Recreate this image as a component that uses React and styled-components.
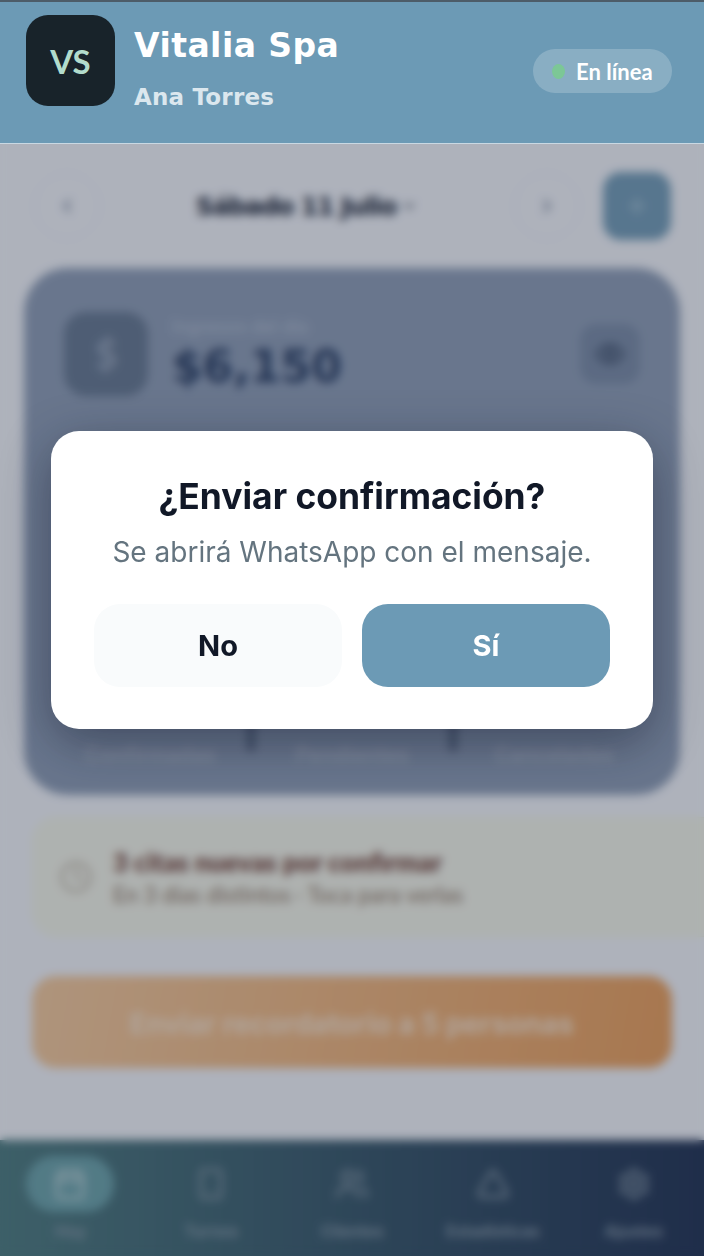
import React from 'react';
import styled, { createGlobalStyle } from 'styled-components';
import { Calendar, ChevronLeft, ChevronRight, Plus, Eye, Clock, Smartphone, Users, Triangle, Settings, ChevronDown } from 'lucide-react';

const GlobalStyle = createGlobalStyle`
  html, body { margin: 0; padding: 0; }
  body { font-family: "Inter", "Liberation Sans", sans-serif; }
  * { box-sizing: border-box; }
`;

const Screen = styled.div`
  position: relative;
  width: 704px;
  height: 1256px;
  overflow: hidden;
  display: flex;
  flex-direction: column;
  background: #f2f5fa;
`;

const Header = styled.header`
  position: relative;
  z-index: 20;
  flex: none;
  height: 144px;
  display: flex;
  align-items: flex-start;
  justify-content: space-between;
  padding: 13px 32px 0 26px;
  background: #6c9ab5;
  border-top: 2px solid #4d5c68;
  border-bottom: 1px solid #c9d8e2;
`;

const Brand = styled.div`
  display: flex;
  gap: 19px;
`;

const Logo = styled.div`
  width: 89px;
  height: 91px;
  border-radius: 22px;
  background: #18232a;
  color: #b2dccc;
  display: flex;
  align-items: center;
  justify-content: center;
  font: 700 33px "Lato", sans-serif;
`;

const BrandText = styled.div`
  display: flex;
  flex-direction: column;
`;

const Title = styled.div`
  margin-top: 10px;
  font: 700 33px/42px "DejaVu Sans", sans-serif;
  color: #fff;
  letter-spacing: 0.45px;
`;

const Subtitle = styled.div`
  margin-top: 16px;
  font: 700 23px/28px "DejaVu Sans", sans-serif;
  color: #dbe7ee;
  letter-spacing: 0.2px;
`;

const Status = styled.div`
  margin-top: 34px;
  width: 139px;
  height: 44px;
  border-radius: 22px;
  background: rgba(255, 255, 255, 0.2);
  display: flex;
  align-items: center;
  gap: 11px;
  padding-left: 19px;
  font: 700 22px "Lato", sans-serif;
  color: #fff;
`;

const Dot = styled.span`
  width: 13px;
  height: 15px;
  border-radius: 50%;
  background: #7cc796;
`;

const Main = styled.main`
  flex: 1;
  min-height: 0;
  overflow: hidden;
  display: flex;
  flex-direction: column;
  padding-top: 28px;
`;

const DateRow = styled.div`
  display: flex;
  align-items: center;
  height: 68px;
  padding: 0 33px 0 34px;
`;

const RoundBtn = styled.div`
  width: 66px;
  height: 66px;
  border-radius: 50%;
  border: 1px solid #e4e8ee;
  display: flex;
  align-items: center;
  justify-content: center;
  color: #64748b;
`;

const DateLabel = styled.div`
  flex: 1;
  display: flex;
  align-items: center;
  justify-content: center;
  gap: 4px;
  font: 700 25px "DejaVu Sans", sans-serif;
  letter-spacing: -1.2px;
  color: #1e293b;
`;

const AddBtn = styled.div`
  margin-left: 23px;
  width: 68px;
  height: 68px;
  border-radius: 18px;
  background: #769fb9;
  color: #a9c6d8;
  display: flex;
  align-items: center;
  justify-content: center;
`;

const Card = styled.section`
  margin: 28px 24px 0;
  height: 527px;
  border-radius: 44px;
  background: #90a0b8;
  padding: 44px 40px 28px;
  display: flex;
  flex-direction: column;
  justify-content: space-between;
`;

const CardTop = styled.div`
  display: flex;
  align-items: center;
  gap: 24px;
`;

const MoneyIcon = styled.div`
  width: 84px;
  height: 84px;
  border-radius: 22px;
  background: #697c94;
  color: #98a7bc;
  display: flex;
  align-items: center;
  justify-content: center;
  font: 700 40px "Lato", sans-serif;
`;

const Amounts = styled.div`
  flex: 1;
`;

const AmountLabel = styled.div`
  font: 500 18px/22px "Inter", sans-serif;
  color: #b0bdd0;
`;

const Amount = styled.div`
  margin-top: 4px;
  font: 700 44px/50px "DejaVu Sans", sans-serif;
  color: #2f4468;
`;

const EyeBtn = styled.div`
  width: 60px;
  height: 60px;
  border-radius: 16px;
  background: #7d8fa9;
  color: #34445f;
  display: flex;
  align-items: center;
  justify-content: center;
`;

const Stats = styled.div`
  display: grid;
  grid-template-columns: 172px 8px 172px 8px 172px;
  justify-content: space-between;
  align-items: end;
`;

const Stat = styled.div`
  text-align: center;
  font: 600 21px "Inter", sans-serif;
  color: #b2bdcd;
`;

const StatDivider = styled.div`
  width: 8px;
  height: 48px;
  margin-bottom: 16px;
  background: #5e6f88;
`;

const Alert = styled.div`
  flex: none;
  margin: 22px 0 0 32px;
  width: 700px;
  height: 120px;
  border-radius: 24px;
  background: #f3f5ea;
  border: 1px solid #eef0de;
  display: flex;
  align-items: center;
  gap: 20px;
  padding-left: 26px;
  color: #bcb3a4;
`;

const AlertText = styled.div`
  flex: 1;
`;

const AlertTitle = styled.div`
  font: 800 26px/30px "Lato", sans-serif;
  color: #7a4f45;
`;

const AlertSub = styled.div`
  margin-top: 6px;
  font: 500 22.3px/24px "Lato", sans-serif;
  color: #94806e;
`;

const Remind = styled.div`
  flex: none;
  margin: 39px 32px 0;
  height: 92px;
  padding-top: 4px;
  border-radius: 24px;
  background: linear-gradient(100deg, #f3cba0, #e9a15f);
  display: flex;
  align-items: center;
  justify-content: center;
  font: 700 28px "Inter", sans-serif;
  color: #f7e2cc;
`;

const Nav = styled.nav`
  flex: none;
  height: 116px;
  display: grid;
  grid-template-columns: repeat(5, 1fr);
  padding: 16px 0 0;
  background: linear-gradient(90deg, #517f83, #263858);
`;

const NavItem = styled.div`
  display: flex;
  flex-direction: column;
  align-items: center;
  gap: 9px;
  color: #8ea0ae;
  font: 600 16px "Inter", sans-serif;
`;

const NavIcon = styled.div`
  width: 88px;
  height: 56px;
  border-radius: 28px;
  background: ${(p) => (p.$active ? '#6fa6ad' : 'transparent')};
  color: ${(p) => (p.$active ? '#c5dadd' : '#8ea0ae')};
  display: flex;
  align-items: center;
  justify-content: center;
`;

const Overlay = styled.div`
  position: absolute;
  inset: 0;
  z-index: 10;
  background: rgba(15, 23, 42, 0.3);
  backdrop-filter: blur(5px);
  display: flex;
  justify-content: center;
  align-items: flex-start;
  padding-top: 431px;
`;

const Modal = styled.div`
  width: 602px;
  height: 298px;
  border-radius: 28px;
  background: #fff;
  box-shadow: 0 14px 50px rgba(15, 23, 42, 0.45);
  padding: 42px 43px 0;
  text-align: center;
`;

const ModalTitle = styled.h2`
  margin: 0;
  font: 700 35.4px/48px "Inter", sans-serif;
  color: #111827;
`;

const ModalText = styled.p`
  margin: 13px 0 0;
  font: 400 28px/36px "Inter", sans-serif;
  color: #64747f;
`;

const ModalActions = styled.div`
  margin-top: 34px;
  display: grid;
  grid-template-columns: 248px 248px;
  gap: 20px;
`;

const ModalBtn = styled.button`
  height: 83px;
  border: 0;
  border-radius: 26px;
  font: 700 29px "Inter", sans-serif;
  background: ${(p) => (p.$primary ? '#6c9ab5' : '#f9fbfc')};
  color: ${(p) => (p.$primary ? '#fff' : '#111827')};
`;

const navItems = [
  { label: 'Hoy', icon: Calendar, active: true },
  { label: 'Turnos', icon: Smartphone },
  { label: 'Clientes', icon: Users },
  { label: 'Estadísticas', icon: Triangle },
  { label: 'Ajustes', icon: Settings },
];

const App = () => {
  return (
    <Screen>
      <GlobalStyle />
      <Header>
        <Brand>
          <Logo>VS</Logo>
          <BrandText>
            <Title>Vitalia Spa</Title>
            <Subtitle>Ana Torres</Subtitle>
          </BrandText>
        </Brand>
        <Status><Dot />En línea</Status>
      </Header>

      <Main>
        <DateRow>
          <RoundBtn><ChevronLeft size={22} /></RoundBtn>
          <DateLabel>Sábado 11 Julio <ChevronDown size={18} /></DateLabel>
          <RoundBtn><ChevronRight size={22} /></RoundBtn>
          <AddBtn><Plus size={28} /></AddBtn>
        </DateRow>

        <Card>
          <CardTop>
            <MoneyIcon>$</MoneyIcon>
            <Amounts>
              <AmountLabel>Ingresos del día</AmountLabel>
              <Amount>$6,150</Amount>
            </Amounts>
            <EyeBtn><Eye size={30} /></EyeBtn>
          </CardTop>
          <Stats>
            <Stat>Confirmadas</Stat>
            <StatDivider />
            <Stat>Pendientes</Stat>
            <StatDivider />
            <Stat>Canceladas</Stat>
          </Stats>
        </Card>

        <Alert>
          <Clock size={34} />
          <AlertText>
            <AlertTitle>3 citas nuevas por confirmar</AlertTitle>
            <AlertSub>En 3 días distintos · Toca para verlas</AlertSub>
          </AlertText>
        </Alert>

        <Remind>Enviar recordatorio a 5 personas</Remind>
      </Main>

      <Nav>
        {navItems.map((item) => (
          <NavItem key={item.label}>
            <NavIcon $active={item.active}><item.icon size={34} /></NavIcon>
            {item.label}
          </NavItem>
        ))}
      </Nav>

      <Overlay>
        <Modal>
          <ModalTitle>¿Enviar confirmación?</ModalTitle>
          <ModalText>Se abrirá WhatsApp con el mensaje.</ModalText>
          <ModalActions>
            <ModalBtn>No</ModalBtn>
            <ModalBtn $primary>Sí</ModalBtn>
          </ModalActions>
        </Modal>
      </Overlay>
    </Screen>
  );
};

export default App;
